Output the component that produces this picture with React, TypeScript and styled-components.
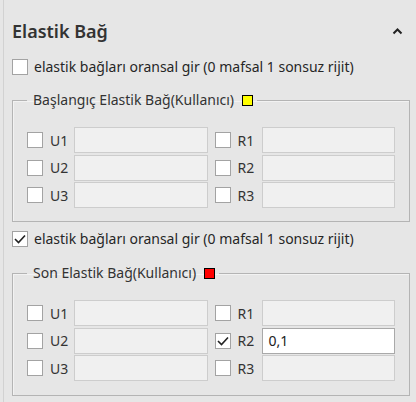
import React from "react";
import styled, { createGlobalStyle } from "styled-components";

const Global = createGlobalStyle`
  html, body { margin: 0; padding: 0; background: #e6e6e6; }
  body { font-family: "Noto Sans", "Open Sans", sans-serif; color: #2b2b2b; }
`;

const Panel = styled.div`
  margin-left: 3px;
  border-left: 1px solid #d2d2d2;
  min-height: 402px;
  box-sizing: border-box;
  padding: 0 6px 0 8px;
`;

const Header = styled.div`
  display: flex;
  align-items: center;
  justify-content: space-between;
  height: 30px;
  padding-top: 16px;
  padding-right: 7px;
`;

const Title = styled.h2`
  margin: 0;
  font-size: 18px;
  font-weight: 600;
  color: #333;
  letter-spacing: 0px;
`;

const CheckRow = styled.label<{ $top: number }>`
  display: flex;
  align-items: center;
  gap: 6px;
  margin-top: ${(p) => p.$top}px;
  font-size: 14px;
  line-height: 18px;
  color: #262626;
`;

const Box = styled.span`
  width: 16px;
  height: 16px;
  box-sizing: border-box;
  border: 1px solid #a3a3a3;
  background: #fff;
  display: inline-flex;
  align-items: center;
  justify-content: center;
  flex: none;
`;

const Group = styled.fieldset<{ $top: number; $bottom: number }>`
  margin: ${(p) => p.$top}px 0 0 0;
  padding: 17px 14px ${(p) => p.$bottom}px 14px;
  border: 1px solid #b4b4b4;
  box-shadow: inset 1px 1px 0 #f2f2f2;
  min-width: 0;
`;

const Legend = styled.legend`
  margin-left: 0;
  padding: 0 4px 0 6px;
  font-size: 14px;
  line-height: 20px;
  color: #333;
  display: flex;
  align-items: center;
  gap: 8px;
`;

const Swatch = styled.span<{ $color: string }>`
  width: 11px;
  height: 11px;
  box-sizing: border-box;
  border: 1px solid #000;
  background: ${(p) => p.$color};
`;

const Grid = styled.div`
  display: grid;
  grid-template-columns: 1fr 1fr;
  column-gap: 7px;
  row-gap: 1.5px;
`;

const Cell = styled.div`
  display: flex;
  align-items: center;
  height: 26px;
`;

const AxisLabel = styled.span`
  font-size: 14px;
  color: #333;
  width: 24px;
  margin-left: 7px;
  flex: none;
`;

const Field = styled.div<{ $enabled?: boolean }>`
  flex: 1;
  height: 26px;
  box-sizing: border-box;
  border: 1px solid ${(p) => (p.$enabled ? "#a9a9a9" : "#cdcdcd")};
  background: ${(p) => (p.$enabled ? "#ffffff" : "#f0f0f0")};
  font-size: 14px;
  line-height: 24px;
  padding-left: 6px;
  color: #222;
`;

const Chevron = () => (
  <svg width="11" height="8" viewBox="0 0 11 8">
    <polyline points="1.5,6.5 5.5,2.5 9.5,6.5" fill="none" stroke="#222" strokeWidth="2" />
  </svg>
);

const Tick = () => (
  <svg width="12" height="10" viewBox="0 0 12 10">
    <polyline points="1,5 4.5,8.5 11,1.5" fill="none" stroke="#222" strokeWidth="1.6" />
  </svg>
);

const Check = ({ checked }: { checked?: boolean }) => <Box>{checked ? <Tick /> : null}</Box>;

type Row = { axis: string; checked?: boolean; value?: string };

const GroupBox = ({
  title,
  color,
  top,
  bottom,
  rows,
}: {
  title: string;
  color: string;
  top: number;
  bottom: number;
  rows: Row[];
}) => (
  <Group $top={top} $bottom={bottom}>
    <Legend>
      {title}
      <Swatch $color={color} />
    </Legend>
    <Grid>
      {rows.map((r) => (
        <Cell key={r.axis}>
          <Check checked={r.checked} />
          <AxisLabel>{r.axis}</AxisLabel>
          <Field $enabled={r.checked}>{r.value}</Field>
        </Cell>
      ))}
    </Grid>
  </Group>
);

const order = (r: Record<string, Row>) => ["U1", "R1", "U2", "R2", "U3", "R3"].map((k) => r[k] || { axis: k });

export default function App() {
  return (
    <>
      <Global />
      <Panel>
        <Header>
          <Title>Elastik Bağ</Title>
          <Chevron />
        </Header>
        <CheckRow $top={12}>
          <Check />
          elastik bağları oransal gir (0 mafsal 1 sonsuz rijit)
        </CheckRow>
        <GroupBox title="Başlangıç Elastik Bağ(Kullanıcı)" color="#ffff00" top={14} bottom={13} rows={order({})} />
        <CheckRow $top={8}>
          <Check checked />
          elastik bağları oransal gir (0 mafsal 1 sonsuz rijit)
        </CheckRow>
        <GroupBox
          title="Son Elastik Bağ(Kullanıcı)"
          color="#ff0000"
          top={15}
          bottom={14}
          rows={order({ R2: { axis: "R2", checked: true, value: "0,1" } })}
        />
      </Panel>
    </>
  );
}
